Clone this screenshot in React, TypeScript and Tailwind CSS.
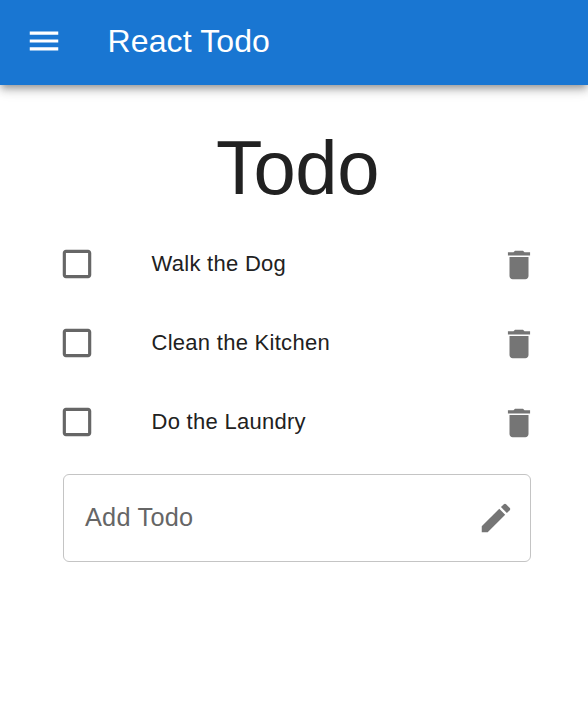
import React from "react";

const todos = ["Walk the Dog", "Clean the Kitchen", "Do the Laundry"];

function Icon({ d, className }: { d: string; className: string }) {
  return (
    <svg viewBox="0 0 24 24" fill="currentColor" className={`shrink-0 ${className}`}>
      <path d={d} />
    </svg>
  );
}

const MENU = "M3 18h18v-2H3v2zm0-5h18v-2H3v2zm0-7v2h18V6H3z";
const BOX = "M19 5v14H5V5h14m0-2H5c-1.1 0-2 .9-2 2v14c0 1.1.9 2 2 2h14c1.1 0 2-.9 2-2V5c0-1.1-.9-2-2-2z";
const TRASH = "M6 19c0 1.1.9 2 2 2h8c1.1 0 2-.9 2-2V7H6v12zM19 4h-3.5l-1-1h-5l-1 1H5v2h14V4z";
const PENCIL =
  "M3 17.25V21h3.75L17.81 9.94l-3.75-3.75L3 17.25zM20.71 7.04c.39-.39.39-1.02 0-1.41l-2.34-2.34a.9959.9959 0 0 0-1.41 0l-1.83 1.83 3.75 3.75 1.83-1.83z";

export default function App() {
  return (
    <div className="min-h-[718px] overflow-hidden bg-white font-['Liberation_Sans',Arial,sans-serif] text-[#212121]">
      <header className="flex h-[85px] items-center bg-[#1976d2] pb-[3px] pl-[25px] text-white shadow-[0_3.2px_6.3px_-1.6px_rgba(0,0,0,0.26),0_6.3px_7.9px_0_rgba(0,0,0,0.16),0_1.6px_15.8px_0_rgba(0,0,0,0.12)]">
        <Icon d={MENU} className="size-[38px]" />
        <span className="ml-[44.5px] text-[32px] leading-[50px] tracking-[0.12px]">React Todo</span>
      </header>
      <main className="pl-[63px] pr-[57px] pt-[36px]">
        <h1 className="pl-px pt-px text-center text-[76px] leading-[91px] tracking-[-0.4px]">Todo</h1>
        <ul className="mt-[11px]">
          {todos.map((t) => (
            <li key={t} className="flex h-[79px] items-center">
              <Icon d={BOX} className="-ml-[5px] size-[38px] text-[#666666]" />
              <span className="ml-[55.5px] flex-1 text-[22px] leading-[32px] tracking-[0.28px]">{t}</span>
              <Icon d={TRASH} className="-mr-[7px] mt-[2px] size-[38px] text-[#757575]" />
            </li>
          ))}
        </ul>
        <div className="mt-[13px] flex h-[88px] items-center justify-between rounded-[6px] border border-[#c4c4c4] pl-[21px] pr-[15px]">
          <span className="text-[25.3px] tracking-[0.24px] text-[#666666]">Add Todo</span>
          <Icon d={PENCIL} className="size-[38px] text-[#757575]" />
        </div>
      </main>
    </div>
  );
}
